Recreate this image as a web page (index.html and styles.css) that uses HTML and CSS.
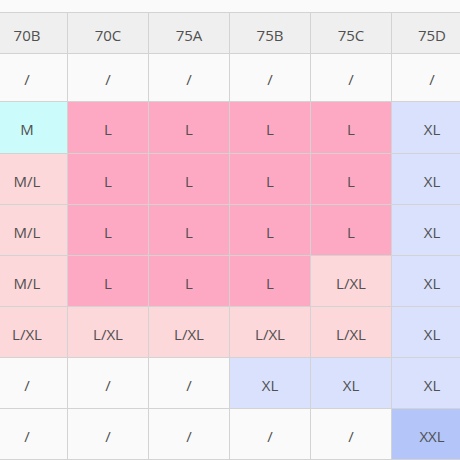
FILE: index.html
```html
<!DOCTYPE html>
<html>
<head>
<meta charset="utf-8">
<link rel="stylesheet" href="styles.css">
</head>
<body>
<table class="size-table">
  <colgroup><col><col><col><col><col><col></colgroup>
  <tr class="head"><th>70B</th><th>70C</th><th>75A</th><th>75B</th><th>75C</th><th>75D</th></tr>
  <tr class="r1"><td>/</td><td>/</td><td>/</td><td>/</td><td>/</td><td>/</td></tr>
  <tr class="r2"><td class="cy">M</td><td class="hp">L</td><td class="hp">L</td><td class="hp">L</td><td class="hp">L</td><td class="lb">XL</td></tr>
  <tr><td class="lp">M/L</td><td class="hp">L</td><td class="hp">L</td><td class="hp">L</td><td class="hp">L</td><td class="lb">XL</td></tr>
  <tr><td class="lp">M/L</td><td class="hp">L</td><td class="hp">L</td><td class="hp">L</td><td class="hp">L</td><td class="lb">XL</td></tr>
  <tr><td class="lp">M/L</td><td class="hp">L</td><td class="hp">L</td><td class="hp">L</td><td class="lp">L/XL</td><td class="lb">XL</td></tr>
  <tr><td class="lp">L/XL</td><td class="lp">L/XL</td><td class="lp">L/XL</td><td class="lp">L/XL</td><td class="lp">L/XL</td><td class="lb">XL</td></tr>
  <tr><td>/</td><td>/</td><td>/</td><td class="lb">XL</td><td class="lb">XL</td><td class="lb">XL</td></tr>
  <tr><td>/</td><td>/</td><td>/</td><td>/</td><td>/</td><td class="db">XXL</td></tr>
</table>
</body>
</html>
```
FILE: styles.css
```css
html, body {
  margin: 0;
  padding: 0;
  background: #fafafa;
  overflow: hidden;
}
.size-table {
  border-collapse: collapse;
  table-layout: fixed;
  margin: 12px 0 0 -14px;
  width: 487px;
  font-family: "Open Sans", "Noto Sans", sans-serif;
  font-size: 15px;
  color: #505050;
}
.size-table col { width: 81px; }
.size-table th,
.size-table td {
  border: 1px solid #d3d3d3;
  text-align: center;
  vertical-align: middle;
  padding: 3px 0 0;
  font-weight: normal;
  background: #fafafa;
  height: 47px;
}
.size-table .head th {
  background: #efefef;
  height: 37px;
}
.size-table .r1 td { height: 44px; }
.size-table .r2 td { height: 48px; }
.size-table td.cy { background: #ccfbfb; }
.size-table td.hp { background: #fda9c4; }
.size-table td.lp { background: #fdd8da; }
.size-table td.lb { background: #d9e1fd; }
.size-table td.db { background: #b3c5f9; }
```
